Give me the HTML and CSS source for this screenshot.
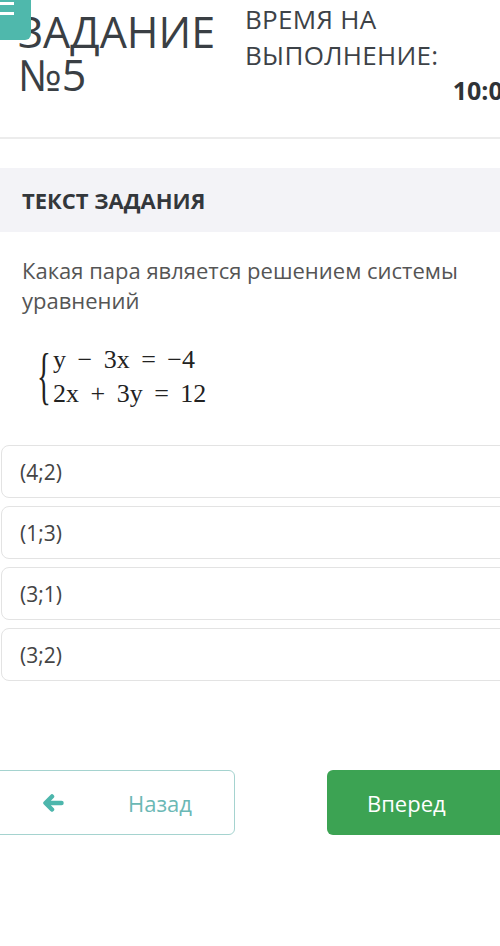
FILE: index.html
```html
<!DOCTYPE html>
<html lang="ru">
<head>
  <meta charset="UTF-8">
  <meta name="viewport" content="width=device-width, initial-scale=1.0">
  <title>Задание №5</title>
  <link rel="stylesheet" href="styles.css">
</head>
<body>
  <button class="menu-btn" aria-label="Меню">
    <span></span>
    <span></span>
  </button>

  <header class="task-head">
    <h1 class="task-title">ЗАДАНИЕ<br>№5</h1>
    <div class="timer">
      <div class="timer-label">ВРЕМЯ НА<br>ВЫПОЛНЕНИЕ:</div>
      <div class="timer-clock">10:00</div>
    </div>
  </header>

  <main>
    <section>
      <h2 class="band">ТЕКСТ ЗАДАНИЯ</h2>
      <p class="question">Какая пара является решением системы уравнений</p>
      <div class="system">
        <span class="brace">{</span>
        <div class="lines">
          <div>y − 3x = −4</div>
          <div>2x + 3y = 12</div>
        </div>
      </div>
    </section>

    <ul class="options">
      <li class="option">(4;2)</li>
      <li class="option">(1;3)</li>
      <li class="option">(3;1)</li>
      <li class="option">(3;2)</li>
    </ul>

    <nav class="nav">
      <button class="btn btn-back">
        <svg width="22" height="18" viewBox="0 0 22 18"><path d="M10 2.5 L3.5 9 L10 15.5 M4 9 H19.5" fill="none" stroke="#4db6ac" stroke-width="4.5" stroke-linecap="round" stroke-linejoin="round"/></svg>
        <span>Назад</span>
      </button>
      <button class="btn btn-next">Вперед</button>
    </nav>
  </main>
</body>
</html>
```

FILE: styles.css
```css
html, body { overflow-x: hidden; }
body { margin: 0; font-family: "Open Sans", "Noto Sans", sans-serif; background: #fff; color: #3b4045; }

/* menu toggle, sits over the page corner */
.menu-btn { position: fixed; top: 0; left: 0; width: 31px; height: 40px; padding: 2px 0 0; border: none; background: #4fb8ac; border-radius: 0 0 6px 0; display: flex; flex-direction: column; gap: 7px; z-index: 5; }
.menu-btn span { display: block; width: 14px; height: 3px; background: #fff; }

.task-head { display: flex; height: 139px; padding: 1px 0 0 18px; box-sizing: border-box; border-bottom: 2px solid #ececec; }
.task-title { margin: 9px 0 0; width: 227px; flex: none; font-size: 43px; font-weight: 400; line-height: 43px; color: #3a3f44; }
.timer { width: 272px; flex: none; }
.timer-label { font-size: 26px; line-height: 36px; letter-spacing: 0.3px; color: #3d4247; }
.timer-clock { margin-top: 2px; text-align: right; font-size: 25px; font-weight: 700; line-height: 30px; color: #2f3337; }

.band { margin: 29px 0 0; height: 64px; padding-left: 22px; display: flex; align-items: center; background: #f3f3f7; font-size: 22px; font-weight: 700; color: #33373b; }
.question { margin: 23px 22px 0; font-size: 22px; line-height: 30px; color: #555; }

.system { display: flex; margin: 28px 0 0 37px; font-family: "Liberation Serif", "Times New Roman", serif; color: #222; }
.brace { font-size: 64px; line-height: 66px; width: 16px; transform: scaleX(0.45); transform-origin: left center; font-weight: 300; }
.lines { font-size: 26px; line-height: 34px; word-spacing: 5px; }

.options { list-style: none; margin: 34px -30px 0 1px; padding: 0; display: flex; flex-direction: column; gap: 8px; }
.option { height: 53px; box-sizing: border-box; border: 1px solid #e3e3e3; border-radius: 8px; padding-left: 18px; display: flex; align-items: center; font-size: 21px; color: #444; }

.nav { display: flex; gap: 92px; margin: 89px 0 0 -10px; }
.btn { width: 245px; height: 65px; flex: none; border-radius: 6px; font-family: inherit; font-size: 22px; display: flex; align-items: center; cursor: pointer; }
.btn-back { background: #fff; border: 1.5px solid #a5d3cf; color: #6bb8b5; padding-left: 51px; gap: 64px; }
.btn-next { background: #3ca353; border: none; color: #fff; padding-left: 40px; }
```
